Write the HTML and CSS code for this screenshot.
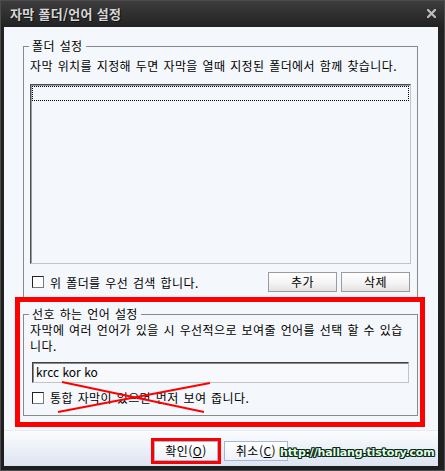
FILE: index.html
```html
<!DOCTYPE html>
<html lang="ko">
<head>
<meta charset="utf-8">
<title>자막 폴더/언어 설정</title>
<link rel="stylesheet" href="styles.css">
</head>
<body>
<div class="window">
  <div class="titlebar">
    <span class="title">자막 폴더/언어 설정</span>
    <svg class="close" width="9" height="9" viewBox="0 0 9 9"><path d="M1 1 L8 8 M8 1 L1 8" stroke="#bdbdbd" stroke-width="2.2" stroke-linecap="square"/></svg>
  </div>
  <div class="client">
    <div class="body">
      <fieldset class="group g1">
        <legend>폴더 설정</legend>
        <p class="desc">자막 위치를 지정해 두면 자막을 열때 지정된 폴더에서 함께 찾습니다.</p>
        <div class="listbox"><div class="focusrow"></div></div>
        <div class="row">
          <label class="check"><span class="box"></span>위 폴더를 우선 검색 합니다.</label>
          <div class="btns"><button class="btn">추가</button><button class="btn">삭제</button></div>
        </div>
      </fieldset>
      <fieldset class="group g2">
        <legend>선호 하는 언어 설정</legend>
        <p class="desc two">자막에 여러 언어가 있을 시 우선적으로 보여줄 언어를 선택 할 수 있습<br>니다.</p>
        <div class="input">krcc kor ko</div>
        <label class="check"><span class="box"></span>통합 자막이 있으면 먼저 보여 줍니다.</label>
      </fieldset>
    </div>
    <div class="footer">
      <button class="dbtn ok">확인(<u>O</u>)</button>
      <button class="dbtn">취소(<u>C</u>)</button>
      <span class="watermark">http://hallang.tistory.com</span>
    </div>
  </div>
  <div class="redbox"></div>
  <svg class="cross" width="160" height="36" viewBox="0 0 160 36"><path d="M6 3 L148 33 M154 4 L2 33" stroke="#f00" stroke-width="2" fill="none"/></svg>
</div>
</body>
</html>
```
FILE: styles.css
```css
* { box-sizing: border-box; }
html, body { margin: 0; padding: 0; }
body {
  width: 445px;
  height: 471px;
  overflow: hidden;
  background: #1c1c1c;
  font-family: "Noto Sans CJK KR", "Noto Sans", sans-serif;
  font-size: 12px;
  color: #000;
}
.window {
  position: relative;
  width: 445px;
  height: 471px;
  background: linear-gradient(#3e3e3e, #222 27px, #1e1e1e);
  box-shadow: inset 0 0 0 1px #4c4c4c;
  display: flex;
  flex-direction: column;
}
.titlebar {
  height: 27px;
  flex: none;
  display: flex;
  align-items: center;
  justify-content: space-between;
  padding: 0 9px 0 10px;
}
.title {
  color: #d6d6d6;
  font-weight: bold;
  font-size: 13px;
  line-height: 16px;
  letter-spacing: 0.3px;
  text-shadow: 1px 1px 0 #111;
}
.close { display: block; }
.client {
  margin: 0 7px 0 4px;
  height: 439px;
  background: #f4f7fb;
  display: flex;
  flex-direction: column;
}
.body {
  flex: 1;
  padding: 11px 20px 0 19px;
  letter-spacing: 0.4px;
  word-spacing: 1px;
}
.group {
  margin: 0;
  padding: 4px 6px 7px;
  border: 1px solid #8a8a8a;
  min-width: 0;
}
.group legend {
  padding: 0 3px;
  margin-left: -1px;
  line-height: 16px;
}
.desc {
  margin: 0;
  line-height: 15px;
  white-space: nowrap;
}
.desc.two { line-height: 16px; }
.listbox {
  margin-top: 11px;
  height: 180px;
  border: 1px solid;
  border-color: #505050 #c4c4c4 #c4c4c4 #505050;
  box-shadow: inset 1px 1px 0 #9a9a9a;
  background: #f4f7fb;
  padding: 1px;
}
.focusrow {
  height: 15px;
  border: 1px dotted #000;
}
.row {
  margin-top: 8px;
  height: 20px;
  display: flex;
  align-items: center;
  justify-content: space-between;
}
.check {
  display: flex;
  align-items: center;
  gap: 6px;
  line-height: 15px;
}
.box {
  width: 12px;
  height: 12px;
  margin-left: 2px;
  border: 1px solid #222;
  border-right-color: #7a7a7a;
  border-bottom-color: #7a7a7a;
  background: #fff;
}
.btns {
  display: flex;
  gap: 4px;
  margin-right: 1px;
}
.btn {
  width: 69px;
  height: 20px;
  padding: 0;
  border: 1px solid #9c9c9c;
  background: linear-gradient(#ffffff, #f4f4f4 55%, #e2e2e2);
  font: inherit;
  letter-spacing: 0.5px;
  line-height: 16px;
  color: #000;
}
.g2 { margin-top: 6px; padding: 0 6px 10px; }
.input {
  margin: 8px 2px 0;
  height: 21px;
  border: 1px solid;
  border-color: #404040 #c4c4c4 #c4c4c4 #404040;
  box-shadow: inset 1px 1px 0 #8a8a8a;
  background: #f7f9fc;
  padding-left: 3px;
  line-height: 18px;
  letter-spacing: 0;
  word-spacing: 0;
}
.g2 .check { margin-top: 7px; }
.footer {
  position: relative;
  height: 36px;
  flex: none;
  display: flex;
  justify-content: center;
  gap: 6px;
  padding-top: 10px;
  border-top: 1px solid #e6ebf3;
  background: linear-gradient(#fbfcfe, #dde4f1);
}
.dbtn {
  width: 64px;
  height: 20px;
  padding: 0;
  border: 1px solid #a4b6da;
  background: linear-gradient(#ffffff, #eef2f9);
  font: inherit;
  letter-spacing: 0.5px;
  line-height: 16px;
  color: #000;
}
.ok { outline: 3px solid #f00; outline-offset: 0; }
.watermark {
  position: absolute;
  left: 276px;
  top: 15px;
  font-family: "DejaVu Sans", sans-serif;
  font-weight: bold;
  font-size: 11px;
  line-height: 13px;
  letter-spacing: -0.15px;
  color: #e2ffe9;
  text-shadow: 1px 0 0 #0b2a14, -1px 0 0 #0b2a14, 0 1px 0 #0b2a14, 0 -1px 0 #0b2a14,
    1px 1px 0 #0b2a14, -1px -1px 0 #0b2a14, 1px -1px 0 #0b2a14, -1px 1px 0 #0b2a14;
}
.redbox {
  position: absolute;
  left: 15px;
  top: 297px;
  width: 410px;
  height: 130px;
  border: 5px solid #f00;
}
.cross {
  position: absolute;
  left: 56px;
  top: 379px;
}
```
